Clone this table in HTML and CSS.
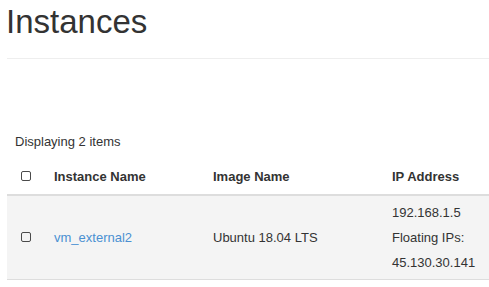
FILE: index.html
```html
<!DOCTYPE html>
<html lang="en">
<head>
  <meta charset="UTF-8" />
  <title>Instances</title>
  <link rel="stylesheet" href="styles.css">
</head>
<body>

  <div class="page-header">
    <h1>Instances</h1>
  </div>

  <table class="table">
    <thead>
      <tr class="count-row">
        <th colspan="4">Displaying 2 items</th>
      </tr>
      <tr class="head-row">
        <th class="col-check"><span class="check"></span></th>
        <th class="col-name">Instance Name</th>
        <th class="col-image">Image Name</th>
        <th class="col-ip">IP Address</th>
      </tr>
    </thead>
    <tbody>
      <tr class="striped">
        <td class="col-check"><span class="check"></span></td>
        <td><a href="#">vm_external2</a></td>
        <td>Ubuntu 18.04 LTS</td>
        <td class="ip-cell">
          <div>192.168.1.5</div>
          <div>Floating IPs:</div>
          <div>45.130.30.141</div>
        </td>
      </tr>
    </tbody>
  </table>

</body>
</html>
```

FILE: styles.css
```css
* {
  margin: 0;
  padding: 0;
  box-sizing: border-box;
}

body {
  font-family: "Liberation Sans", Arial, sans-serif;
  font-size: 13px;
  line-height: 1.42857;
  color: #333;
  background-color: #fff;
  padding: 0 0 0 7px;
  overflow: hidden;
}

.page-header {
  padding: 4px 0 18px 0;
  border-bottom: 1px solid #eee;
  margin-bottom: 66px;
}

.page-header h1 {
  font-size: 33px;
  font-weight: normal;
  line-height: 1.1;
  margin-left: -1px;
}

.table {
  border-collapse: collapse;
  width: 500px;
}

.table th,
.table td {
  padding: 8px;
  text-align: left;
  vertical-align: middle;
}

.table th {
  font-weight: bold;
}

.count-row th {
  font-weight: normal;
}

.head-row th {
  border-bottom: 2px solid #ddd;
}

.col-check {
  width: 39px;
}

.col-name {
  width: 159px;
}

.col-image {
  width: 179px;
}

.check {
  display: inline-block;
  width: 10px;
  height: 10px;
  margin-left: 6px;
  border: 1px solid #4a4a4a;
  border-radius: 2px;
  vertical-align: middle;
  position: relative;
  top: -1px;
}

.striped td {
  background-color: #f4f4f4;
  border-bottom: 1px solid #ddd;
}

.striped a {
  color: #4a90d2;
  text-decoration: none;
}

.table td.ip-cell {
  padding-top: 4px;
  padding-bottom: 4px;
  line-height: 25px;
}
```
